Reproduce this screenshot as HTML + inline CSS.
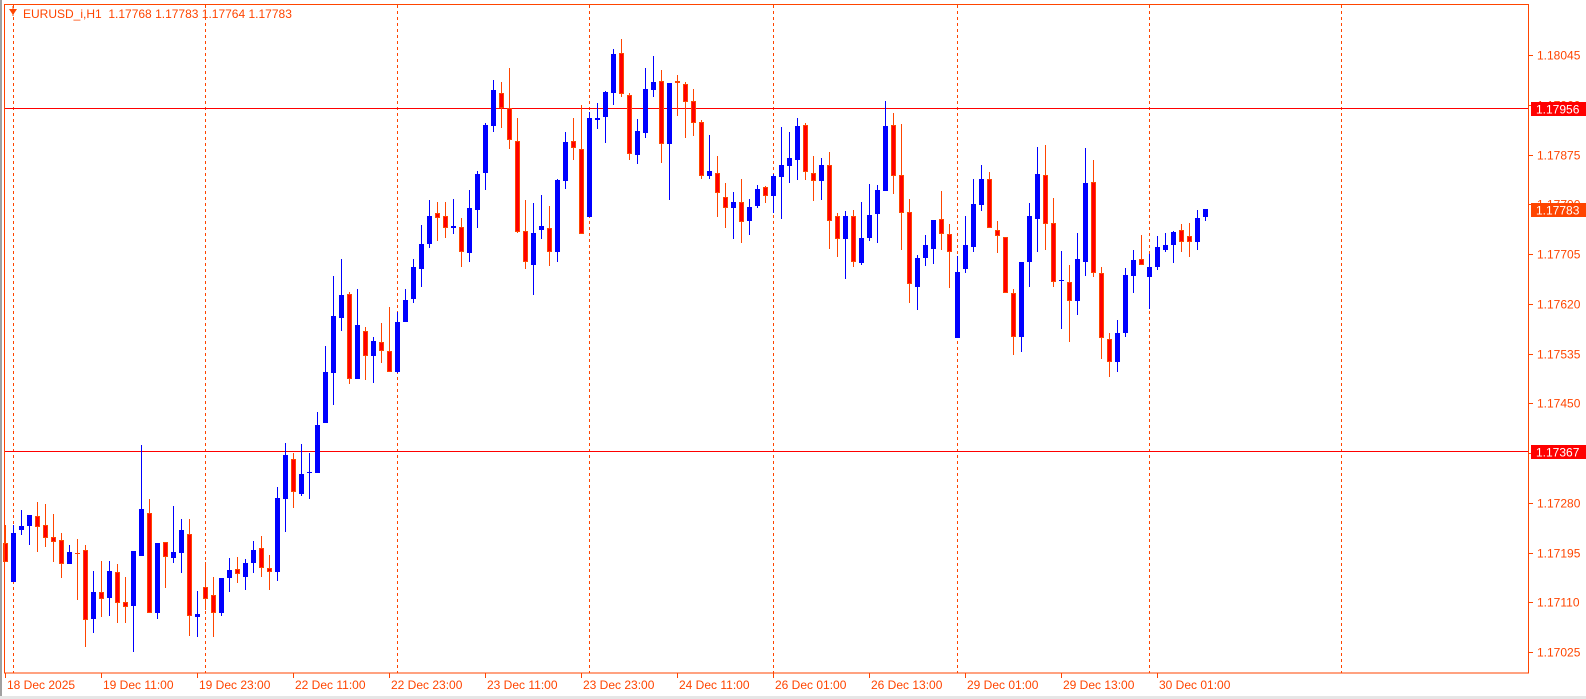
<!DOCTYPE html>
<html><head><meta charset="utf-8">
<style>
html,body{margin:0;padding:0;background:#fff;}
body{width:1586px;height:699px;position:relative;overflow:hidden;font-family:"Liberation Sans",sans-serif;}
svg{position:absolute;left:0;top:0;}
</style></head>
<body>
<svg id="s" width="1586" height="699" xmlns="http://www.w3.org/2000/svg" font-family="Liberation Sans, sans-serif" font-size="12">
<rect x="0" y="0" width="1586" height="699" fill="#fff"/>
<rect x="0" y="0" width="2" height="699" fill="#a0a0a0"/>
<rect x="0" y="696" width="1586" height="3" fill="#e6e6e6"/>
<g id="grid" stroke="#ff4500" stroke-width="1" stroke-dasharray="3,3">
<line x1="13.5" y1="5" x2="13.5" y2="673"/>
<line x1="205.5" y1="5" x2="205.5" y2="673"/>
<line x1="397.5" y1="5" x2="397.5" y2="673"/>
<line x1="589.5" y1="5" x2="589.5" y2="673"/>
<line x1="773.5" y1="5" x2="773.5" y2="673"/>
<line x1="957.5" y1="5" x2="957.5" y2="673"/>
<line x1="1149.5" y1="5" x2="1149.5" y2="673"/>
<line x1="1341.5" y1="5" x2="1341.5" y2="673"/>
</g>
<line x1="4" y1="108.5" x2="1529" y2="108.5" stroke="#ff0000"/>
<line x1="4" y1="451.5" x2="1529" y2="451.5" stroke="#ff0000"/>
<g id="c"></g>
<rect x="4.5" y="4.5" width="1524" height="668.5" fill="none" stroke="#ff4500"/>
<g fill="#ff4500">
<polygon points="9,9 17,9 13,15"/>
<rect x="12.5" y="6" width="1" height="10"/>
</g>
<text x="23" y="18" fill="#ff4500" font-size="12" style="white-space:pre" xml:space="preserve">EURUSD_i,H1  1.17768 1.17783 1.17764 1.17783</text>
<g id="py" fill="#ff4500" font-size="12"></g>
<g id="tx" fill="#ff4500" font-size="12"></g>
<rect x="1531" y="102" width="55" height="14" fill="#ff0000"/>
<text x="1536" y="113.5" fill="#fff" font-size="12">1.17956</text>
<rect x="1531" y="203" width="55" height="14" fill="#ff4500"/>
<text x="1536" y="214.5" fill="#fff" font-size="12">1.17783</text>
<rect x="1531" y="445" width="55" height="14" fill="#ff0000"/>
<text x="1536" y="456.5" fill="#fff" font-size="12">1.17367</text>
</svg>
<script>
(function(){
var NS="http://www.w3.org/2000/svg";
function el(n,a,p){var e=document.createElementNS(NS,n);for(var k in a)e.setAttribute(k,a[k]);p.appendChild(e);return e;}
var z1="r 855 910 965 965|b 855 880 1025 1025|b 810 858 870 885|b 825 825 858 915|r 785 828 860 935|r 792 855 893 922|r 822 892 905 965|r 880 900 973 1013|b 915 937 973 973|r 897 940 943 1080|r 915 930 1140 1222|b 993 1056 1136 1178|r 963 1056 1078 1130|b 963 993 1073 1128|r 972 997 1088 1148|r 1010 1086 1100 1150|b 933 933 1097 1236|b 615 807 947 947|r 777 820 1118 1118|b 910 910 1118 1138|r 906 906 950 1043|b 798 937 953 968|b 837 870 940 1000|r 837 883 1127 1187|b 1053 1122 1130 1190|r 967 1040 1078 1110|r 1010 1066 1118 1190|b 1013 1015 1118 1127|b 953 990 1013 1055|r 950 988 1003 1028|b 957 968 1010 1050|b 903 930 970 1000|r 888 925 985 1010|r 945 985 997 1050|b 740 775 997 1022|b 608 645 778 875|r 640 658 757 803|b 612 702 762 767|b 638 697 700 778|b 517 555 700 700|b 318 397 550 550|b 107 228 398 495|b 57 165 233 272|r 155 163 418 432|b 147 255 416 416|r 262 273 347 420|b 292 303 347 428|r 248 307 332 368|r 200 333 395 395";
var z2="b 845 876 1025 1030|b 777 810 875 875|b 687 712 808 820|b 585 643 716 770|b 510 558 641 653|r 516 550 563 632|r 516 558 595 623|b 507 588 593 613|r 565 592 667 710|b 480 535 668 697|b 423 432 539 593|b 280 285 430 480|b 150 180 287 305|r 155 190 235 293|r 113 235 331 356|r 263 333 605 610|r 510 604 697 716|b 518 610 704 795|b 495 588 601 627|r 528 595 665 707|b 447 450 665 695|b 305 337 452 476|r 263 333 355 390|r 225 357 613 613|b 247 265 560 560|b 218 265 269 297|b 183 186 260 338|b 57 72 190 225|r 27 70 193 200|r 188 195 373 390|b 267 303 374 402|b 113 177 308 323|b 77 156 179 200|r 120 153 343 398|b 158 158 343 510|r 135 153 160 258|r 157 162 215 323|r 177 213 280 318|r 270 277 437 446|b 315 423 437 446|r 378 430 490 560|r 460 502 535 593|b 487 515 533 626|r 447 515 575 640|b 507 531 572 614|b 465 477 527 533|r 468 472 499 520|b 433 438 497 549|b 290 405 440 566|b 305 384 407 460";
var z3="b 83 108 209 270|r 100 105 247 270|r 198 250 272 332|b 204 225 272 330|r 185 226 392 477|r 368 378 446 500|b 363 378 446 567|r 360 378 516 530|b 336 444 519 524|b 282 375 443 453|b 285 300 372 458|b 33 108 302 302|r 68 105 257 312|r 101 255 370 480|r 327 366 581 638|b 495 505 590 660|b 435 465 503 528|b 390 390 476 521|r 303 387 431 480|r 402 432 485 593|b 497 546 743 743|b 378 465 536 548|b 266 342 470 486|b 225 267 345 362|r 246 267 415 415|r 393 420 437 489|r 440 441 610 610|r 597 609 742 794|b 516 516 740 785|b 339 378 515 590|b 171 252 386 485|r 165 255 401 480|r 323 399 575 590|b 483 570 572 717|r 525 576 632 755|b 429 507 632 675|b 174 279 515 557|r 210 276 548 560|r 531 549 743 807|r 729 747 815 860|b 690 729 815 845|b 534 555 728 740|b 481 510 557 608|r 435 508 526 526|b 492 531 560 656|b 438 471 530 540|b 429 465 479 487|b 423 426 464 519|r 402 421 457 485|r 399 438 455 500|b 360 384 455 480";
var data=[];
function add(s,off){s.split("|").forEach(function(r){var p=r.split(" ");data.push([p[0],off+p[1]/3,off+p[2]/3,off+p[3]/3,off+p[4]/3]);});}
add(z1,240);add(z2,30);add(z3,90);
data.push(["b",209,209,217,221]);
var g=document.getElementById("c");
data.forEach(function(d,k){
 var xb=3+8*k, xw=5+8*k;
 var h=Math.round(d[1]),t=Math.round(d[2]),b=Math.round(d[3]),l=Math.round(d[4]);
 if(b-t<1)b=t+1;
 var wc=d[0]=="b"?"#0000ff":"#ff4500";
 el("rect",{x:xw,y:h,width:1,height:Math.max(1,l-h),fill:wc},g);
 if(d[0]=="b"){el("rect",{x:xb,y:t,width:5,height:b-t,fill:"#0000ff"},g);}
 else{el("rect",{x:xb,y:t,width:5,height:b-t,fill:"#ff4500"},g);
  if(b-t>2)el("rect",{x:xb+1,y:t+1,width:3,height:b-t-2,fill:"#ff0000"},g);}
});
var py=document.getElementById("py");
var labs=["1.18045","1.17960","1.17875","1.17790","1.17705","1.17620","1.17535","1.17450","1.17365","1.17280","1.17195","1.17110","1.17025"];
labs.forEach(function(s,i){var y=55+i*49.75;
 el("rect",{x:1529,y:Math.round(y),width:4,height:1},py);
 var t=el("text",{x:1537,y:Math.round(y)+4.5},py);t.textContent=s;});
var tx=document.getElementById("tx");
var tl=["18 Dec 2025","19 Dec 11:00","19 Dec 23:00","22 Dec 11:00","22 Dec 23:00","23 Dec 11:00","23 Dec 23:00","24 Dec 11:00","26 Dec 01:00","26 Dec 13:00","29 Dec 01:00","29 Dec 13:00","30 Dec 01:00"];
tl.forEach(function(s,i){var x=5+96*i;
 el("rect",{x:x,y:673,width:1,height:5},tx);
 var t=el("text",{x:x+2,y:689},tx);t.textContent=s;});
})();
</script>
</body></html>
